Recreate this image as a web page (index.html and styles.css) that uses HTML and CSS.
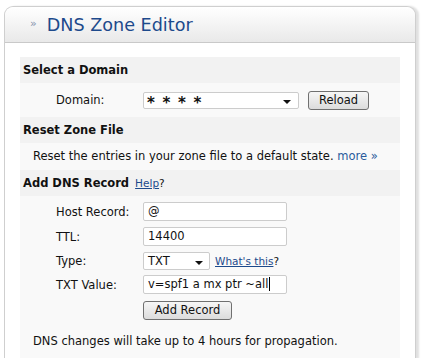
FILE: index.html
```html
<!DOCTYPE html>
<html>
<head>
<meta charset="utf-8">
<link rel="stylesheet" href="styles.css">
</head>
<body>
<div class="panel">
  <div class="panel-head">
    <span class="raquo">&raquo;</span>
    <h1 class="title">DNS Zone Editor</h1>
  </div>
  <div class="panel-body">
    <div class="band">Select a Domain</div>
    <div class="domain-row">
      <span class="label">Domain:</span>
      <span class="select select-domain"><span class="stars">* * * *</span><span class="arrow"></span></span>
      <button class="btn btn-reload">Reload</button>
    </div>
    <div class="band">Reset Zone File</div>
    <div class="text-row">Reset the entries in your zone file to a default state. <a class="more">more &raquo;</a></div>
    <div class="band">Add DNS Record <a class="help">Help</a><span class="q">?</span></div>
    <div class="form">
      <div class="frow r1">
        <span class="label">Host Record:</span>
        <span class="input">@</span>
      </div>
      <div class="frow r2">
        <span class="label">TTL:</span>
        <span class="input">14400</span>
      </div>
      <div class="frow r3">
        <span class="label">Type:</span>
        <span class="select select-type">TXT<span class="arrow"></span></span>
        <a class="whats">What's this</a><span class="q2">?</span>
      </div>
      <div class="frow r4">
        <span class="label">TXT Value:</span>
        <span class="input">v=spf1 a mx ptr ~all<span class="caret"></span></span>
      </div>
      <div class="frow r5">
        <span class="label"></span>
        <button class="btn btn-add">Add Record</button>
      </div>
      <div class="note">DNS changes will take up to 4 hours for propagation.</div>
    </div>
  </div>
</div>
</body>
</html>
```
FILE: styles.css
```css
html, body {
  margin: 0;
  padding: 0;
  background: #ffffff;
  font-family: "DejaVu Sans", Verdana, sans-serif;
  font-size: 11.5px;
  color: #111111;
  overflow: hidden;
}
.panel {
  margin: 6px 0 0 4px;
  width: 410px;
  height: 352px;
  border: 1px solid #cfcfcf;
  border-bottom: none;
  border-radius: 9px 9px 0 0;
  background: #ffffff;
  box-shadow: 3px 0 2px rgba(0, 0, 0, 0.12);
  overflow: hidden;
}
.panel-head {
  height: 35px;
  border-bottom: 1px solid #c9c9c9;
  border-radius: 9px 9px 0 0;
  background: linear-gradient(#ffffff, #e9e9e9);
  display: flex;
  align-items: center;
  padding-left: 25px;
}
.raquo {
  color: #8593ad;
  font-size: 11px;
  margin-right: 10px;
  margin-top: -2px;
}
.title {
  margin: 0;
  font-weight: normal;
  font-size: 17.6px;
  color: #1d4a8c;
}
.panel-body {
  padding: 14px 15px 0 15px;
}
.band {
  background: #f2f2f2;
  height: 26px;
  line-height: 26px;
  padding-left: 3px;
  font-weight: bold;
  color: #111;
}
.domain-row {
  background: #f9f9f9;
  height: 34px;
  display: flex;
  align-items: center;
}
.label {
  display: inline-block;
  width: 87px;
  padding-left: 36px;
  box-sizing: content-box;
}
.select {
  position: relative;
  display: inline-block;
  box-sizing: border-box;
  background: #fff;
  border: 1px solid #cccccc;
  border-radius: 2px;
  height: 17px;
  line-height: 15px;
  padding-left: 3px;
}
.select-domain {
  width: 156px;
  margin-top: 1px;
}
.stars {
  font-weight: bold;
  font-size: 15px;
  letter-spacing: 1.2px;
  position: relative;
  top: 3px;
}
.arrow {
  position: absolute;
  right: 7px;
  top: 7px;
  width: 0;
  height: 0;
  border-left: 4px solid transparent;
  border-right: 4px solid transparent;
  border-top: 4px solid #111;
}
.btn {
  font-family: "DejaVu Sans", Verdana, sans-serif;
  font-size: 11.5px;
  color: #111;
  background: linear-gradient(#f6f6f6, #dcdcdc);
  border: 1px solid #707070;
  border-radius: 3px;
  height: 19px;
  padding: 0;
  line-height: 17px;
}
.btn-reload {
  width: 61px;
  margin-left: 9px;
}
.text-row {
  background: #f9f9f9;
  height: 27px;
  line-height: 27px;
  padding-left: 13px;
}
.more {
  color: #2a5b9c;
  text-decoration: none;
}
.help {
  font-weight: normal;
  font-size: 10.5px;
  color: #1d4a8c;
  text-decoration: underline;
  margin-left: 2px;
}
.q {
  font-weight: normal;
  font-size: 10.5px;
}
.form {
  background: #f9f9f9;
  padding-top: 6px;
  height: 200px;
}
.frow {
  display: flex;
  align-items: center;
  height: 19px;
}
.r2 { margin-top: 6px; }
.r3 { margin-top: 6px; height: 18px; }
.r4 { margin-top: 5px; }
.r5 { margin-top: 7px; }
.input {
  display: inline-block;
  box-sizing: border-box;
  width: 144px;
  height: 19px;
  line-height: 17px;
  background: #fff;
  border: 1px solid #cccccc;
  border-radius: 2px;
  padding-left: 4px;
  white-space: nowrap;
}
.caret {
  display: inline-block;
  width: 1px;
  height: 14px;
  background: #000;
  vertical-align: -3px;
  margin-left: 1px;
}
.select-type {
  width: 67px;
  height: 18px;
  line-height: 16px;
  padding-left: 4px;
}
.select-type .arrow {
  top: 8px;
  right: 6px;
}
.whats {
  margin-left: 5px;
  color: #1d4a8c;
  text-decoration: underline;
  font-size: 10.5px;
}
.q2 {
  font-size: 10.5px;
}
.btn-add {
  width: 89px;
}
.note {
  margin-top: 14px;
  padding-left: 13px;
  line-height: 15px;
}
```
